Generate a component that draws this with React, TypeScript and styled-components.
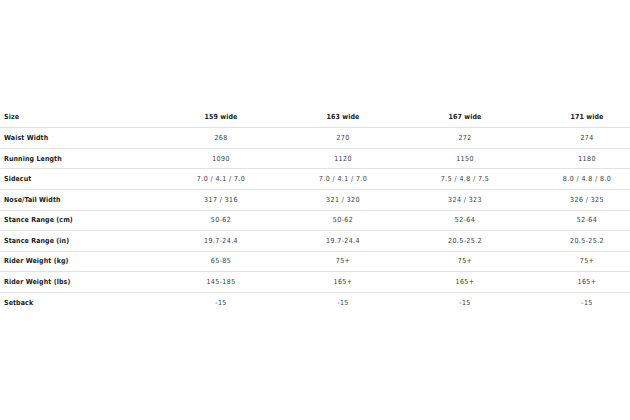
import React from "react";
import styled, { createGlobalStyle } from "styled-components";

const Global = createGlobalStyle`
  html, body { margin: 0; padding: 0; background: #fff; overflow: hidden; }
  body { font-family: "DejaVu Sans Condensed", "DejaVu Sans", sans-serif; }
`;

const Page = styled.div`
  width: 630px;
  height: 420px;
  overflow: hidden;
  display: flex;
  flex-direction: column;
  justify-content: center;
`;

const Table = styled.div`
  width: 648px;
  display: grid;
  grid-template-columns: 160px repeat(4, 122px);
  grid-auto-rows: 20.6px;
  margin-top: 1px;
`;

const Row = styled.div<{ $last?: boolean }>`
  display: contents;
  & > * {
    border-bottom: ${(p) => (p.$last ? "none" : "1px solid #e2e2e2")};
  }
`;

const Label = styled.div`
  display: flex;
  align-items: center;
  padding-left: 4px;
  font-size: 7px;
  font-weight: 700;
  color: #1a1a1a;
  letter-spacing: 0.1px;
`;

const Cell = styled.div<{ $head?: boolean }>`
  display: flex;
  align-items: center;
  justify-content: center;
  font-size: 7px;
  font-weight: ${(p) => (p.$head ? 700 : 400)};
  color: ${(p) => (p.$head ? "#1a1a1a" : "#3a3a3a")};
  letter-spacing: ${(p) => (p.$head ? "0.1px" : "0.4px")};
`;

const head = ["159 wide", "163 wide", "167 wide", "171 wide"];
const rows: [string, string[]][] = [
  ["Waist Width", ["268", "270", "272", "274"]],
  ["Running Length", ["1090", "1120", "1150", "1180"]],
  ["Sidecut", ["7.0 / 4.1 / 7.0", "7.0 / 4.1 / 7.0", "7.5 / 4.8 / 7.5", "8.0 / 4.8 / 8.0"]],
  ["Nose/Tail Width", ["317 / 316", "321 / 320", "324 / 323", "326 / 325"]],
  ["Stance Range (cm)", ["50-62", "50-62", "52-64", "52-64"]],
  ["Stance Range (in)", ["19.7-24.4", "19.7-24.4", "20.5-25.2", "20.5-25.2"]],
  ["Rider Weight (kg)", ["65-85", "75+", "75+", "75+"]],
  ["Rider Weight (lbs)", ["145-185", "165+", "165+", "165+"]],
  ["Setback", ["-15", "-15", "-15", "-15"]],
];

export default function App() {
  return (
    <Page>
      <Global />
      <Table>
        <Row>
          <Label>Size</Label>
          {head.map((h) => (
            <Cell key={h} $head>
              {h}
            </Cell>
          ))}
        </Row>
        {rows.map(([label, vals], i) => (
          <Row key={label} $last={i === rows.length - 1}>
            <Label>{label}</Label>
            {vals.map((v, j) => (
              <Cell key={j}>{v}</Cell>
            ))}
          </Row>
        ))}
      </Table>
    </Page>
  );
}
